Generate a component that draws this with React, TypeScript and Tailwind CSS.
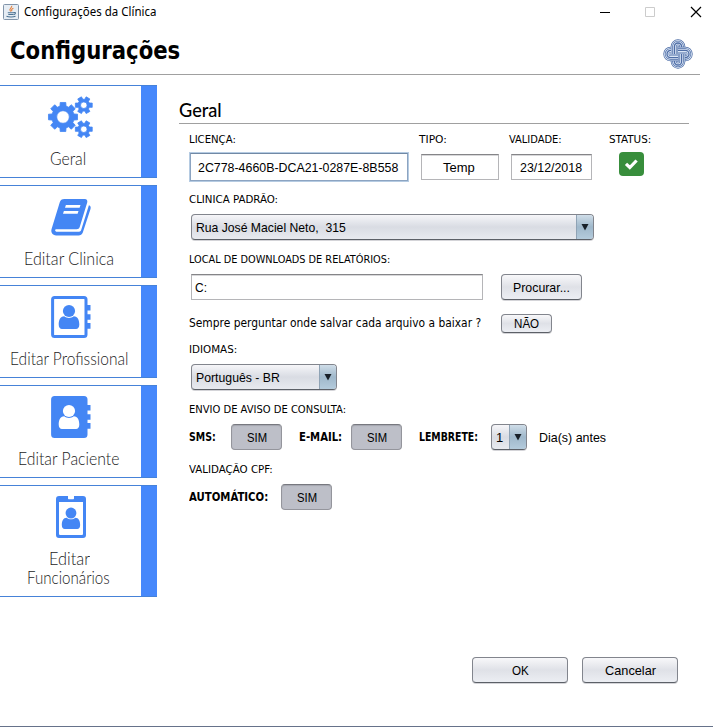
import React, { useLayoutEffect, useRef, useState } from "react";
import clsx from "clsx";

const TAHOMA = "font-['DejaVu_Sans_Condensed','DejaVu_Sans',sans-serif]";
const ARIAL = "font-['Liberation_Sans',sans-serif] text-[13px]";
const LATO = "font-['Lato',sans-serif]";

/* A single line of text, condensed or widened to the width of its box. */
function Fit({ children, className }: { children: string; className: string }) {
  const box = useRef<HTMLSpanElement>(null);
  const text = useRef<HTMLSpanElement>(null);
  const [scale, setScale] = useState(1);
  useLayoutEffect(() => {
    if (box.current && text.current) {
      setScale(box.current.clientWidth / text.current.offsetWidth);
    }
  }, [children]);
  return (
    <span ref={box} className={clsx("block shrink-0 whitespace-pre", className)}>
      <span ref={text} className="inline-block origin-left" style={{ transform: `scaleX(${scale})` }}>
        {children}
      </span>
    </span>
  );
}

function Label({ children, className }: { children: string; className: string }) {
  return <Fit className={clsx(TAHOMA, "h-5 text-[11px] leading-[22px]", className)}>{children}</Fit>;
}

function Bold({ children, className }: { children: string; className: string }) {
  return <Fit className={clsx(TAHOMA, "text-[12px] leading-5 font-bold", className)}>{children}</Fit>;
}

function Button({ text, textClass, className }: { text: string; textClass: string; className: string }) {
  return (
    <button
      className={clsx(
        "flex shrink-0 items-center justify-center rounded-[4px] border border-[#82858d] border-b-[#5c6067] bg-linear-to-b from-[#f8f8fa] via-[#dfe1e7] to-[#eceef3] pt-0.5 shadow-[0_1px_0_#d4d4d8]",
        ARIAL,
        className,
      )}
    >
      <Fit className={textClass}>{text}</Fit>
    </button>
  );
}

function Toggle({ className }: { className?: string }) {
  return (
    <button
      className={clsx(
        "flex h-[26px] w-[51px] shrink-0 items-center justify-center rounded-[4px] border border-[#94959c] border-t-[#77787f] bg-[#bdbfc8] pt-0.5 shadow-[inset_0_1px_1px_#a4a6ae]",
        ARIAL,
        className,
      )}
    >
      <Fit className="w-5">SIM</Fit>
    </button>
  );
}

function Field({ children, className }: { children: React.ReactNode; className: string }) {
  return (
    <div
      className={clsx(
        "flex h-[26px] shrink-0 items-center border border-[#b5b5b8] border-t-[#858588] bg-white pt-0.5 shadow-[inset_0_1px_0_#d8d8da]",
        ARIAL,
        className,
      )}
    >
      {children}
    </div>
  );
}

function Combo({
  text,
  textClass,
  className,
}: {
  text: string;
  textClass: string;
  className: string;
}) {
  return (
    <div
      className={clsx(
        "flex h-[26px] shrink-0 items-stretch overflow-hidden rounded-[4px] border border-[#82858d] border-b-[#5c6067] bg-linear-to-b from-[#f6f6f9] via-[#d9dce3] to-[#e8eaef] shadow-[0_1px_0_#d4d4d8]",
        ARIAL,
        className,
      )}
    >
      <div className="flex flex-1 items-center pt-0.5 pl-1">
        <Fit className={textClass}>{text}</Fit>
      </div>
      <div className="flex w-[17px] items-center justify-center border-l border-[#8fa3b5] bg-linear-to-b from-[#cfdde8] via-[#9fb8cb] to-[#b4cbdc]">
        <svg width="8" height="8" viewBox="0 0 8 8">
          <path d="M.5 1h7L4 7.5z" fill="#182028" />
        </svg>
      </div>
    </div>
  );
}

function gear(cx: number, cy: number, outer: number, root: number, teeth: number, half: number, topHalf: number) {
  const pts: string[] = [];
  for (let i = 0; i < teeth; i++) {
    const a = (i * 2 * Math.PI) / teeth;
    const put = (r: number, d: number) =>
      pts.push(`${(cx + r * Math.cos(a + d)).toFixed(2)} ${(cy + r * Math.sin(a + d)).toFixed(2)}`);
    put(root, -half);
    put(outer, -topHalf);
    put(outer, topHalf);
    put(root, half);
  }
  return `M${pts.join("L")}Z`;
}

function hole(cx: number, cy: number, r: number) {
  return `M${cx - r} ${cy}a${r} ${r} 0 1 0 ${2 * r} 0a${r} ${r} 0 1 0 ${-2 * r} 0Z`;
}

function Gears() {
  return (
    <svg width="48" height="44" viewBox="0 0 48 44" fill="#4486f4" fillRule="evenodd" stroke="#4486f4" strokeWidth=".8" strokeLinejoin="round">
      <path d={gear(16, 22, 14.8, 11.3, 8, 0.27, 0.19) + hole(16, 22, 6.3)} />
      <path d={gear(36.8, 10.2, 8.7, 6, 6, 0.36, 0.25) + hole(36.8, 10.2, 3.3)} />
      <path d={gear(36.8, 34.2, 8.7, 6, 6, 0.36, 0.25) + hole(36.8, 34.2, 3.3)} />
    </svg>
  );
}

function Book() {
  return (
    <svg width="48" height="44" viewBox="0 0 48 44">
      <path
        fill="#4486f4"
        d="M17.5 4h20.3c2 0 3 1.7 2.4 3.5l-7.4 24.2c-.6 1.8-1.7 2.5-3.2 2.5H9.2c-1.5 0-1.5 2.5.9 2.5h22c1 0 1.7-.5 2-1.4l7.8-25c1.8.5 2.1 2 1.6 3.6l-7.7 23.6c-.7 2-2.4 2.9-4.2 2.9H9.2c-3.7 0-5.5-3-4.7-6.1L12.7 7.6C13.4 5 14.8 4 17.5 4z"
      />
      <path d="M18.9 10h14.6l-.9 2.8H18zM16.9 16h14.6l-.9 2.8H16z" fill="#fff" />
    </svg>
  );
}

function Person({ fill }: { fill: string }) {
  return (
    <g fill={fill}>
      <circle cx="22" cy="16" r="6.1" />
      <path d="M17.2 21.2c2.7 2.3 6.9 2.3 9.6 0 4 0 5.5 3.9 5.5 8.3 0 3-1.3 4.4-3.3 4.4H15c-2 0-3.3-1.4-3.3-4.4 0-4.4 1.5-8.3 5.5-8.3z" />
    </g>
  );
}

function AddressBook({ filled }: { filled?: boolean }) {
  return (
    <svg width="48" height="44" viewBox="0 0 48 44">
      <rect
        x="5.6"
        y="2.5"
        width="33.4"
        height="39"
        rx="2"
        fill={filled ? "#4486f4" : "#fff"}
        stroke="#4486f4"
        strokeWidth="3"
      />
      <path d="M39 10h4.5v5.5H39zM39 19.2h4.5v5.5H39zM39 28h4.5v5.7H39z" fill="#4486f4" />
      <Person fill={filled ? "#fff" : "#4486f4"} />
    </svg>
  );
}

function Badge() {
  return (
    <svg width="48" height="44" viewBox="0 0 48 44">
      <path
        fillRule="evenodd"
        fill="#4486f4"
        d="M12 1h9v2.3c0 .7.4 1 1 1h4c.6 0 1-.3 1-1V1h9c2 0 3 1 3 3v36c0 2-1 3-3 3H12c-2 0-3-1-3-3V4c0-2 1-3 3-3zm0 6v31.5c0 1 .5 1.5 1.5 1.5h21c1 0 1.5-.5 1.5-1.5V7z"
      />
      <g transform="translate(4.4 3.8) scale(.89)">
        <Person fill="#4486f4" />
      </g>
    </svg>
  );
}

function Tile({ icon, lines, tall }: { icon: React.ReactNode; lines: [string, string][]; tall?: boolean }) {
  return (
    <button
      className={clsx(
        "flex w-[157px] shrink-0 border-y border-[#4682d8] bg-[#4688fb]",
        tall ? "h-[112px]" : "h-[93px]",
      )}
    >
      <span className="flex h-full w-[141px] flex-col items-center bg-white pt-[9px]">
        <span className="ml-[1px] block h-11 w-12">{icon}</span>
        <span className="mt-[10px] flex flex-col items-center">
          {lines.map(([text, cls]) => (
            <Fit key={text} className={clsx(LATO, "h-[19px] text-left text-[17.5px] leading-[19px] font-light text-[#1c1c1c]", cls)}>
              {text}
            </Fit>
          ))}
        </span>
      </span>
    </button>
  );
}

/* Four looped bands, each one passing over the next at the centre. */
function Knot() {
  const loop = "M-3.6 0V-7.4a3.6 3.6 0 0 1 7.2 0V-7";
  return (
    <svg width="34" height="34" viewBox="-17 -17 34 34" fill="none">
      {[0, 90, 180, 270].map((turn) => (
        <g key={turn} transform={`rotate(${turn})`}>
          <path d={loop} stroke="#4f6ea6" strokeWidth="7.4" />
          <path d={loop} stroke="#dbe6f6" strokeWidth="6" />
          <path d={loop} stroke="#4f6ea6" strokeWidth="4.4" />
          <path d={loop} stroke="#dbe6f6" strokeWidth="3" />
          <path d={loop} stroke="#4f6ea6" strokeWidth="1.3" />
        </g>
      ))}
    </svg>
  );
}

function JavaIcon() {
  return (
    <svg width="16" height="16" viewBox="0 0 16 16" fill="none">
      <rect x=".5" y=".5" width="15" height="15" rx="1" fill="#e6edf4" stroke="#8295aa" />
      <path d="M8.7 1.8c.8 2-3 2.7-1.6 4.7l.7 1M10.4 4.2C8.3 5.2 8.3 6 9 7.3" stroke="#e5813c" strokeWidth="1.1" />
      <path d="M4.8 8.7h6M5.3 10.5h5M10.8 8.6c2.4-.6 2 1.6-.2 2M3.5 12.3c2 1 7 1 9 0" stroke="#4d7393" strokeWidth="1.1" />
    </svg>
  );
}

export default function App() {
  return (
    <div className="flex h-[727px] w-[713px] flex-col overflow-hidden border-b border-[#66728a] bg-white text-black">
      <header className="flex h-6 shrink-0 items-center pr-[10px] pl-[3px]">
        <JavaIcon />
        <Fit className="ml-[5px] w-[132px] font-['Noto_Sans',sans-serif] text-[12px] leading-5">Configurações da Clínica</Fit>
        <svg className="ml-auto" width="104" height="12" viewBox="0 0 104 12" fill="none">
          <path d="M1 6.5h10" stroke="#000" />
          <path d="M46.5 1.5h9v9h-9z" stroke="#ccc" />
          <path d="M92 1l10 10M102 1L92 11" stroke="#000" strokeWidth="1.2" />
        </svg>
      </header>

      <div className="ml-[10px] flex h-[51px] w-[690px] shrink-0 items-center justify-between border-b border-[#a0a0a0] pr-[5px]">
        <Fit className={clsx(TAHOMA, "mt-[3px] w-[170px] text-[24px] leading-8 font-bold")}>Configurações</Fit>
        <div className="mt-[9px]">
          <Knot />
        </div>
      </div>

      <div className="flex flex-1 pt-[10px]">
        <nav className="flex w-[157px] shrink-0 flex-col gap-[7px]">
          <Tile icon={<Gears />} lines={[["Geral", "w-[36px] mr-[5px]"]]} />
          <Tile icon={<Book />} lines={[["Editar Clinica", "w-[90px] mr-[3px]"]]} />
          <Tile icon={<AddressBook />} lines={[["Editar Profissional", "w-[118px] mr-[3px]"]]} />
          <Tile icon={<AddressBook filled />} lines={[["Editar Paciente", "w-[101px] mr-[4px]"]]} />
          <Tile
            icon={<Badge />}
            tall
            lines={[
              ["Editar", "w-[41px] mr-[3px]"],
              ["Funcionários", "w-[83px] mr-[4px]"],
            ]}
          />
        </nav>

        <main className="ml-[22px] flex w-[510px] flex-col pt-[13px]">
          <div className="h-[26px] shrink-0 border-b border-[#a0a0a0]">
            <Fit className={clsx(LATO, "w-[43px] text-[19px] leading-6 font-medium")}>Geral</Fit>
          </div>

          <div className="flex flex-col pt-[5px] pl-[10px]">
            <div className="flex h-5">
              <Label className="w-[47px]">LICENÇA:</Label>
              <Label className="ml-[183px] w-[28px]">TIPO:</Label>
              <Label className="ml-[62px] w-[53px]">VALIDADE:</Label>
              <Label className="ml-[47px] w-[42px]">STATUS:</Label>
            </div>
            <div className="mt-[3px] flex h-[30px] items-center">
              <div
                className={clsx(
                  "flex h-[30px] w-[220px] shrink-0 items-center border-2 border-[#8ca4c1] border-t-[#7189a5] bg-white pt-0.5 pl-[7px] outline-1 -outline-offset-1 outline-[#b5cbe2]",
                  ARIAL,
                )}
              >
                <Fit className="w-[200px]">2C778-4660B-DCA21-0287E-8B558</Fit>
              </div>
              <Field className="ml-3 w-[78px] pl-[21px]">
                <Fit className="w-8">Temp</Fit>
              </Field>
              <Field className="ml-3 w-[81px] pl-[8px]">
                <Fit className="w-[62px]">23/12/2018</Fit>
              </Field>
              <div className="mb-[6px] ml-[27px] flex h-6 w-[25px] items-center justify-center rounded-[4px] bg-[#388e3c]">
                <svg width="15" height="12" viewBox="0 0 15 12">
                  <path d="M2 5.8l3.8 3.7 6.8-7" fill="none" stroke="#fff" strokeWidth="3.2" />
                </svg>
              </div>
            </div>

            <Label className="mt-[7px] w-[89px]">CLINICA PADRÃO:</Label>
            <Combo className="mt-[5px] ml-[2px] w-[403px]" text="Rua José Maciel Neto,  315" textClass="w-[150px]" />

            <Label className="mt-[9px] w-[201px]">LOCAL DE DOWNLOADS DE RELATÓRIOS:</Label>
            <div className="mt-[5px] ml-[2px] flex h-[26px]">
              <Field className="w-[292px] pl-[3px]">
                <Fit className="w-[12px]">C:</Fit>
              </Field>
              <Button className="ml-[18px] h-[26px] w-[81px]" text="Procurar..." textClass="w-[57px]" />
            </div>

            <div className="mt-[13px] flex h-5 items-center">
              <Fit className={clsx(TAHOMA, "w-[292px] text-[12px] leading-5")}>
                Sempre perguntar onde salvar cada arquivo a baixar ?
              </Fit>
              <Button className="ml-5 h-[19px] w-[51px]" text="NÃO" textClass="w-[25px]" />
            </div>

            <Label className="mt-[6px] w-[48px]">IDIOMAS:</Label>
            <Combo className="mt-[5px] ml-[2px] w-[146px]" text="Português - BR" textClass="w-[84px]" />

            <Label className="mt-[9px] w-[157px]">ENVIO DE AVISO DE CONSULTA:</Label>
            <div className="mt-[5px] flex h-[26px] items-center">
              <Bold className="w-[27px]">SMS:</Bold>
              <Toggle className="ml-[15px]" />
              <Bold className="ml-[17px] w-[43px]">E-MAIL:</Bold>
              <Toggle className="ml-[9px]" />
              <Bold className="ml-[17px] w-[59px]">LEMBRETE:</Bold>
              <Combo className="ml-[13px] w-9" text="1" textClass="w-[7px]" />
              <Fit className={clsx(ARIAL, "mt-0.5 ml-3 w-[67px]")}>Dia(s) antes</Fit>
            </div>

            <Label className="mt-[9px] w-[84px]">VALIDAÇÃO CPF:</Label>
            <div className="mt-[5px] flex h-[26px] items-center">
              <Bold className="w-[79px]">AUTOMÁTICO:</Bold>
              <Toggle className="ml-[13px]" />
            </div>
          </div>

          <footer className="mt-[147px] mr-[11px] flex justify-end gap-[14px]">
            <Button className="h-[26px] w-[96px]" text="OK" textClass="w-[17px]" />
            <Button className="h-[26px] w-[96px]" text="Cancelar" textClass="w-[51px]" />
          </footer>
        </main>
      </div>
    </div>
  );
}
